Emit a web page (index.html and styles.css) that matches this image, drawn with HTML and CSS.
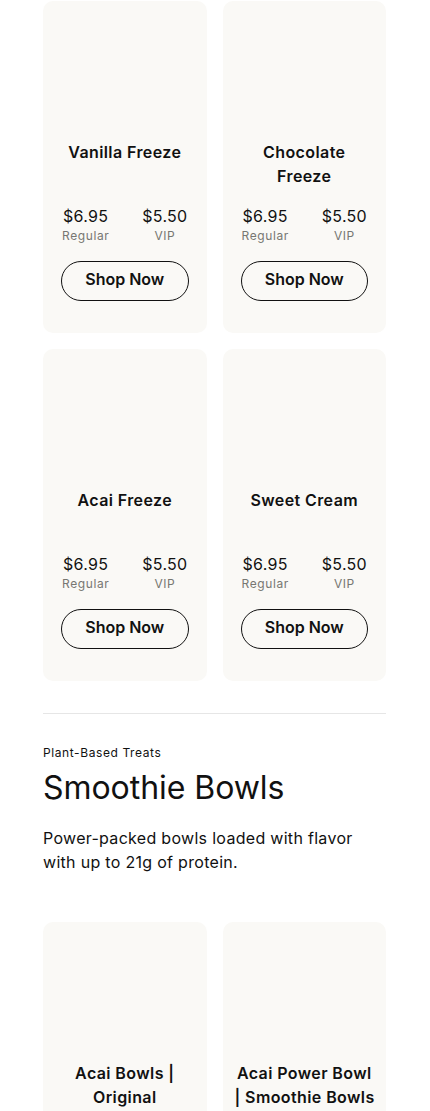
FILE: index.html
```html
<!DOCTYPE html>
<html>
<head>
<meta charset="utf-8">
<link rel="stylesheet" href="styles.css">
</head>
<body>
<main class="page">
  <section class="grid">
    <article class="card">
      <div class="media"></div>
      <h3 class="title">Vanilla Freeze</h3>
      <div class="prices">
        <div class="price"><span class="amt">$6.95</span><span class="lbl">Regular</span></div>
        <div class="price"><span class="amt">$5.50</span><span class="lbl">VIP</span></div>
      </div>
      <a class="btn">Shop Now</a>
    </article>
    <article class="card">
      <div class="media"></div>
      <h3 class="title">Chocolate Freeze</h3>
      <div class="prices">
        <div class="price"><span class="amt">$6.95</span><span class="lbl">Regular</span></div>
        <div class="price"><span class="amt">$5.50</span><span class="lbl">VIP</span></div>
      </div>
      <a class="btn">Shop Now</a>
    </article>
    <article class="card">
      <div class="media"></div>
      <h3 class="title">Acai Freeze</h3>
      <div class="prices">
        <div class="price"><span class="amt">$6.95</span><span class="lbl">Regular</span></div>
        <div class="price"><span class="amt">$5.50</span><span class="lbl">VIP</span></div>
      </div>
      <a class="btn">Shop Now</a>
    </article>
    <article class="card">
      <div class="media"></div>
      <h3 class="title">Sweet Cream</h3>
      <div class="prices">
        <div class="price"><span class="amt">$6.95</span><span class="lbl">Regular</span></div>
        <div class="price"><span class="amt">$5.50</span><span class="lbl">VIP</span></div>
      </div>
      <a class="btn">Shop Now</a>
    </article>
  </section>

  <hr class="divider">

  <section class="intro">
    <p class="eyebrow">Plant-Based Treats</p>
    <h2 class="heading">Smoothie Bowls</h2>
    <p class="desc">Power-packed bowls loaded with flavor with up to 21g of protein.</p>
  </section>

  <section class="grid">
    <article class="card">
      <div class="media"></div>
      <h3 class="title">Acai Bowls | Original</h3>
      <div class="prices">
        <div class="price"><span class="amt">$11.95</span><span class="lbl">Regular</span></div>
        <div class="price"><span class="amt">$9.95</span><span class="lbl">VIP</span></div>
      </div>
      <a class="btn">Shop Now</a>
    </article>
    <article class="card">
      <div class="media"></div>
      <h3 class="title"><span class="seg">Acai Power Bowl</span> <span class="seg">| Smoothie Bowls</span></h3>
      <div class="prices">
        <div class="price"><span class="amt">$12.95</span><span class="lbl">Regular</span></div>
        <div class="price"><span class="amt">$10.95</span><span class="lbl">VIP</span></div>
      </div>
      <a class="btn">Shop Now</a>
    </article>
  </section>
</main>
</body>
</html>
```

FILE: styles.css
```css
* { box-sizing: border-box; }
html, body { margin: 0; padding: 0; background: #ffffff; }
body {
  font-family: Inter, "Noto Sans", "Liberation Sans", sans-serif;
  color: #111111;
}
.page {
  padding: 1px 44px 40px 43px;
}
.grid {
  display: grid;
  grid-template-columns: repeat(2, minmax(0, 1fr));
  gap: 16px;
}
.card {
  min-width: 0;
  background: #faf9f6;
  border-radius: 10px;
  padding: 16px 18px 32px;
  display: flex;
  flex-direction: column;
}
.media {
  height: 123px;
}
.title {
  margin: 0 -6px;
  min-height: 48px;
  font-size: 16px;
  line-height: 24px;
  font-weight: 600;
  text-align: center;
  letter-spacing: 0.4px;
}
.seg {
  white-space: nowrap;
}
.prices {
  margin-top: 18px;
  display: flex;
  justify-content: space-between;
  padding: 0 1px;
}
.price {
  display: flex;
  flex-direction: column;
  align-items: center;
}
.amt {
  font-size: 16px;
  line-height: 20px;
  font-weight: 400;
  letter-spacing: 0.3px;
}
.lbl {
  margin-top: 2px;
  font-size: 12px;
  line-height: 16px;
  color: #777772;
  letter-spacing: 0.6px;
}
.btn {
  margin-top: 17px;
  height: 40px;
  border: 1px solid #111;
  border-radius: 20px;
  display: flex;
  align-items: center;
  justify-content: center;
  font-size: 16px;
  font-weight: 600;
  padding-bottom: 4px;
}
.divider {
  margin: 32px 0 0;
  border: 0;
  border-top: 1px solid #e6e6e6;
}
.intro {
  padding: 31px 0 48px;
}
.eyebrow {
  margin: 0;
  font-size: 12px;
  line-height: 16px;
  letter-spacing: 0.6px;
}
.heading {
  margin: 7px 0 0;
  font-size: 32px;
  line-height: 40px;
  font-weight: 400;
  letter-spacing: -0.05px;
}
.desc {
  margin: 18px 0 0;
  font-size: 16px;
  line-height: 24px;
  letter-spacing: 0.3px;
}
```
